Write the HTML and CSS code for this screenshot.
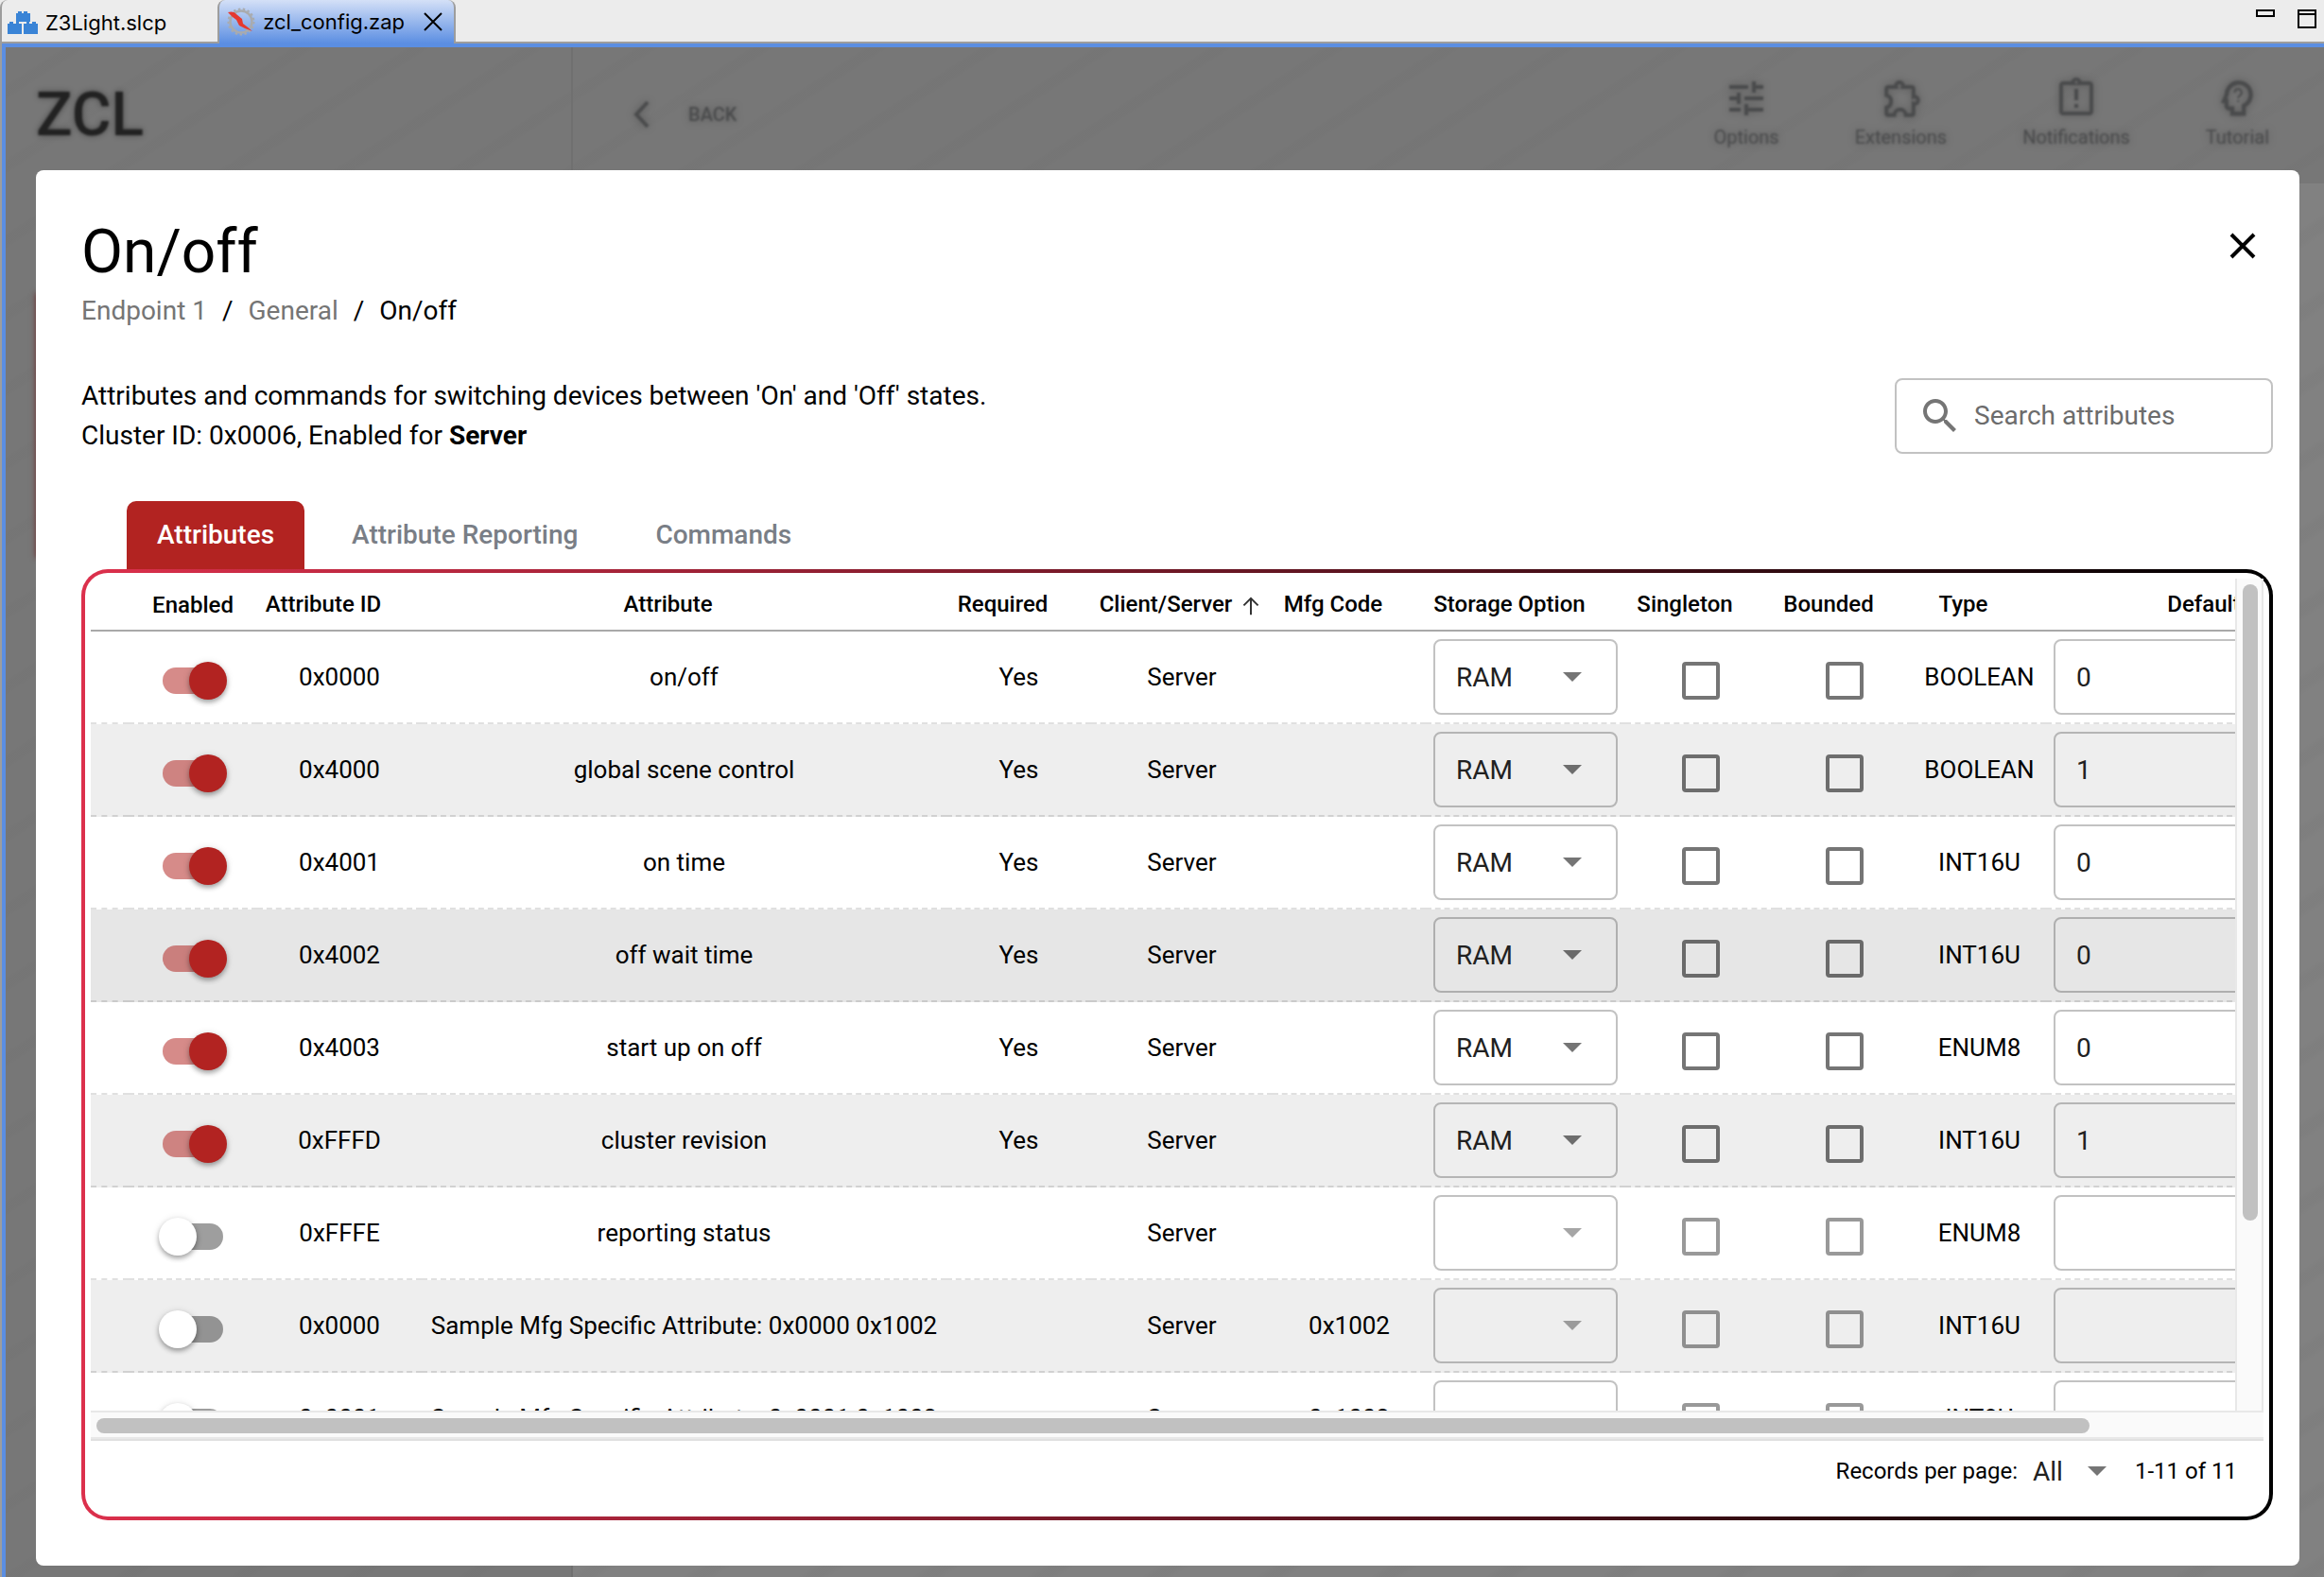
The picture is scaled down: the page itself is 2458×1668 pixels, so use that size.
FILE: index.html
```html
<!DOCTYPE html>
<html lang="en">
<head>
<meta charset="utf-8">
<title>zcl_config.zap</title>
<link rel="stylesheet" href="styles.css">
</head>
<body>
<svg class="defs" aria-hidden="true">
  <symbol id="sort" viewBox="0 0 24 24"><path d="M12 4.500V20M5.500 11.500 12 5l6.500 6.500" fill="none" stroke="currentColor" stroke-width="1.700"/></symbol>
</svg>

<div class="editor-tabs">
  <button class="editor-tab" type="button">
    <svg width="32" height="26" viewBox="0 0 32 26" fill="#3a84d6"><path d="M9 3h2V1h4v2h2V1h4v2h3v9H9z"/><path d="M0 14h2v-2h4v2h3v-2h3v2h3v11H0zM17 14h3v-2h3v2h3v-2h4v2h2v11H17z"/></svg>
    Z3Light.slcp
  </button>
  <button class="editor-tab active" type="button">
    <svg width="30" height="30" viewBox="0 0 30 30"><circle cx="15" cy="15" r="11.500" fill="none" stroke="#a9abae" stroke-width="2.500"/><circle cx="15" cy="15" r="13.500" fill="none" stroke="#a9abae" stroke-width="2" stroke-dasharray="2.500 2.500"/><path d="M1 5c3-1 7-1 9 2l6 5 1 5 4 3 6 5-8-3-6-3-3-6-4-3z" fill="#e5392f"/></svg>
    zcl_config.zap
    <svg class="tab-close" width="20" height="20" viewBox="0 0 20 20"><path d="M1 1l18 18M19 1 1 19" stroke="#000" stroke-width="2"/></svg>
  </button>
  <div class="window-controls">
    <button type="button" aria-label="Minimize"><svg width="20" height="20" viewBox="0 0 20 20" fill="none" stroke="#000" stroke-width="2"><path d="M1 1h18v6H1z"/></svg></button>
    <button type="button" aria-label="Maximize"><svg width="20" height="20" viewBox="0 0 20 20" fill="none" stroke="#000" stroke-width="2"><path d="M1 1h18v18H1zM1 5h18"/></svg></button>
  </div>
</div>

<div class="workspace">
  <div class="backdrop">
    <aside class="sidebar">
      <div class="brand">ZCL</div>
      <div class="endpoint-card"></div>
    </aside>
    <div class="content">
      <header class="toolbar">
        <button class="back" type="button"><svg width="20" height="32" viewBox="0 0 20 32"><path d="M16 3 4 16l12 13" fill="none" stroke="currentColor" stroke-width="4"/></svg>BACK</button>
        <nav class="tools">
          <button type="button"><svg width="48" height="48" viewBox="0 0 24 24"><path d="M3 17v2h6v-2H3zM3 5v2h10V5H3zm10 16v-2h8v-2h-8v-2h-2v6h2zM7 9v2H3v2h4v2h2V9H7zm14 4v-2H11v2h10zm-6-4h2V7h4V5h-4V3h-2v6z"/></svg>Options</button>
          <button type="button"><svg width="48" height="48" viewBox="0 0 24 24" fill="none"><path d="M5.500 6h4.200a1.900 1.900 0 1 1 3.600 0H18a.9.9 0 0 1 .9.900v4.300a1.900 1.900 0 1 1 0 3.600V20a.9.9 0 0 1-.9.900h-3.200a3 3 0 0 0-6 0H5.500a.9.9 0 0 1-.9-.9v-3.200a3.300 3.300 0 0 0 0-6.400V6.900a.9.9 0 0 1 .9-.9z" stroke="currentColor" stroke-width="2"/></svg>Extensions</button>
          <button type="button"><svg width="48" height="48" viewBox="0 0 24 24"><path d="M19 3h-4.180C14.400 1.840 13.300 1 12 1s-2.400.84-2.820 2H5c-1.100 0-2 .9-2 2v14c0 1.100.9 2 2 2h14c1.100 0 2-.9 2-2V5c0-1.100-.9-2-2-2zm-7-.25c.41 0 .75.340.750.750s-.340.750-.750.750-.750-.340-.750-.750.340-.750.750-.750zM19 19H5V5h14v14zM11 7h2v6h-2zm0 8h2v2h-2z"/></svg>Notifications</button>
          <button type="button"><svg width="48" height="48" viewBox="0 0 24 24" fill="none"><path d="M9.500 20.100v-2.700H8a1.600 1.600 0 0 1-1.600-1.600v-2.400H5.100L6.500 10a6.400 6.400 0 1 1 9.100 5.900v4.200z" stroke="currentColor" stroke-width="2.200"/><path d="M10.800 9a1.800 1.800 0 1 1 2.700 1.500c-.6.400-.9.800-.9 1.500M12.600 13v1" stroke="currentColor"/></svg>Tutorial</button>
        </nav>
      </header>
    </div>
  </div>

  <main class="dialog" role="dialog" aria-labelledby="dialog-title">
    <div class="dialog-head">
      <h1 id="dialog-title">On/off</h1>
      <button class="close" type="button" aria-label="Close"><svg width="28" height="28" viewBox="0 0 28 28"><path d="M2 2l24 24M26 2 2 26" stroke="#000" stroke-width="4"/></svg></button>
    </div>
    <nav class="crumbs" aria-label="Breadcrumb"><a href="#">Endpoint 1</a><span>/</span><a href="#">General</a><span>/</span><b>On/off</b></nav>
    <div class="summary">
      <p>Attributes and commands for switching devices between 'On' and 'Off' states.<br>Cluster ID: 0x0006, Enabled for <strong>Server</strong></p>
      <label class="search">
        <svg width="48" height="48" viewBox="0 0 24 24" fill="currentColor"><path d="M15.500 14h-.79l-.28-.27C15.410 12.590 16 11.110 16 9.500 16 5.910 13.090 3 9.500 3S3 5.910 3 9.500 5.910 16 9.500 16c1.610 0 3.090-.59 4.230-1.570l.27.28v.79l5 4.990L20.490 19l-4.990-5zm-6 0C7.010 14 5 11.990 5 9.500S7.010 5 9.500 5 14 7.010 14 9.500 11.990 14 9.500 14z"/></svg>
        <input type="text" placeholder="Search attributes" aria-label="Search attributes">
      </label>
    </div>
    <div class="tabs" role="tablist">
      <button class="tab selected" type="button" role="tab" aria-selected="true">Attributes</button>
      <button class="tab" type="button" role="tab">Attribute Reporting</button>
      <button class="tab" type="button" role="tab">Commands</button>
    </div>

    <section class="panel">
      <div class="scroller">
        <div class="viewport">
          <table>
            <colgroup><col class="c-pad"><col class="c-enabled"><col class="c-id"><col class="c-name"><col class="c-req"><col class="c-side"><col class="c-mfg"><col class="c-store"><col class="c-single"><col class="c-bound"><col class="c-type"><col class="c-default"></colgroup>
            <thead>
              <tr>
                <th></th>
                <th>Enabled</th>
                <th class="sortable">Attribute ID<svg><use href="#sort"/></svg></th>
                <th class="sortable">Attribute<svg><use href="#sort"/></svg></th>
                <th class="sortable">Required<svg><use href="#sort"/></svg></th>
                <th class="sortable sorted">Client/Server<svg><use href="#sort"/></svg></th>
                <th class="sortable">Mfg Code<svg><use href="#sort"/></svg></th>
                <th class="sortable">Storage Option<svg><use href="#sort"/></svg></th>
                <th class="sortable">Singleton<svg><use href="#sort"/></svg></th>
                <th class="sortable">Bounded<svg><use href="#sort"/></svg></th>
                <th class="sortable">Type<svg><use href="#sort"/></svg></th>
                <th class="sortable">Default<svg><use href="#sort"/></svg></th>
              </tr>
            </thead>
            <tbody>
              <tr>
                <td></td>
                <td class="control"><input class="toggle" type="checkbox" aria-label="Enable on/off" checked></td>
                <td>0x0000</td><td>on/off</td><td>Yes</td><td>Server</td><td></td>
                <td><div class="select"><select aria-label="Storage option"><option>RAM</option></select></div></td>
                <td class="control"><input class="check" type="checkbox" aria-label="Singleton"></td>
                <td class="control"><input class="check" type="checkbox" aria-label="Bounded"></td>
                <td>BOOLEAN</td>
                <td><input class="field" type="text" value="0" aria-label="Default"></td>
              </tr>
              <tr>
                <td></td>
                <td class="control"><input class="toggle" type="checkbox" aria-label="Enable global scene control" checked></td>
                <td>0x4000</td><td>global scene control</td><td>Yes</td><td>Server</td><td></td>
                <td><div class="select"><select aria-label="Storage option"><option>RAM</option></select></div></td>
                <td class="control"><input class="check" type="checkbox" aria-label="Singleton"></td>
                <td class="control"><input class="check" type="checkbox" aria-label="Bounded"></td>
                <td>BOOLEAN</td>
                <td><input class="field" type="text" value="1" aria-label="Default"></td>
              </tr>
              <tr>
                <td></td>
                <td class="control"><input class="toggle" type="checkbox" aria-label="Enable on time" checked></td>
                <td>0x4001</td><td>on time</td><td>Yes</td><td>Server</td><td></td>
                <td><div class="select"><select aria-label="Storage option"><option>RAM</option></select></div></td>
                <td class="control"><input class="check" type="checkbox" aria-label="Singleton"></td>
                <td class="control"><input class="check" type="checkbox" aria-label="Bounded"></td>
                <td>INT16U</td>
                <td><input class="field" type="text" value="0" aria-label="Default"></td>
              </tr>
              <tr class="hovered">
                <td></td>
                <td class="control"><input class="toggle" type="checkbox" aria-label="Enable off wait time" checked></td>
                <td>0x4002</td><td>off wait time</td><td>Yes</td><td>Server</td><td></td>
                <td><div class="select"><select aria-label="Storage option"><option>RAM</option></select></div></td>
                <td class="control"><input class="check" type="checkbox" aria-label="Singleton"></td>
                <td class="control"><input class="check" type="checkbox" aria-label="Bounded"></td>
                <td>INT16U</td>
                <td><input class="field" type="text" value="0" aria-label="Default"></td>
              </tr>
              <tr>
                <td></td>
                <td class="control"><input class="toggle" type="checkbox" aria-label="Enable start up on off" checked></td>
                <td>0x4003</td><td>start up on off</td><td>Yes</td><td>Server</td><td></td>
                <td><div class="select"><select aria-label="Storage option"><option>RAM</option></select></div></td>
                <td class="control"><input class="check" type="checkbox" aria-label="Singleton"></td>
                <td class="control"><input class="check" type="checkbox" aria-label="Bounded"></td>
                <td>ENUM8</td>
                <td><input class="field" type="text" value="0" aria-label="Default"></td>
              </tr>
              <tr>
                <td></td>
                <td class="control"><input class="toggle" type="checkbox" aria-label="Enable cluster revision" checked></td>
                <td>0xFFFD</td><td>cluster revision</td><td>Yes</td><td>Server</td><td></td>
                <td><div class="select"><select aria-label="Storage option"><option>RAM</option></select></div></td>
                <td class="control"><input class="check" type="checkbox" aria-label="Singleton"></td>
                <td class="control"><input class="check" type="checkbox" aria-label="Bounded"></td>
                <td>INT16U</td>
                <td><input class="field" type="text" value="1" aria-label="Default"></td>
              </tr>
              <tr>
                <td></td>
                <td class="control"><input class="toggle" type="checkbox" aria-label="Enable reporting status"></td>
                <td>0xFFFE</td><td>reporting status</td><td></td><td>Server</td><td></td>
                <td><div class="select off"><select aria-label="Storage option" disabled></select></div></td>
                <td class="control"><input class="check" type="checkbox" aria-label="Singleton" disabled></td>
                <td class="control"><input class="check" type="checkbox" aria-label="Bounded" disabled></td>
                <td>ENUM8</td>
                <td><input class="field" type="text" aria-label="Default" disabled></td>
              </tr>
              <tr>
                <td></td>
                <td class="control"><input class="toggle" type="checkbox" aria-label="Enable sample attribute 0x0000"></td>
                <td>0x0000</td><td>Sample Mfg Specific Attribute: 0x0000 0x1002</td><td></td><td>Server</td><td>0x1002</td>
                <td><div class="select off"><select aria-label="Storage option" disabled></select></div></td>
                <td class="control"><input class="check" type="checkbox" aria-label="Singleton" disabled></td>
                <td class="control"><input class="check" type="checkbox" aria-label="Bounded" disabled></td>
                <td>INT16U</td>
                <td><input class="field" type="text" aria-label="Default" disabled></td>
              </tr>
              <tr>
                <td></td>
                <td class="control"><input class="toggle" type="checkbox" aria-label="Enable sample attribute 0x0001"></td>
                <td>0x0001</td><td>Sample Mfg Specific Attribute: 0x0001 0x1002</td><td></td><td>Server</td><td>0x1002</td>
                <td><div class="select off"><select aria-label="Storage option" disabled></select></div></td>
                <td class="control"><input class="check" type="checkbox" aria-label="Singleton" disabled></td>
                <td class="control"><input class="check" type="checkbox" aria-label="Bounded" disabled></td>
                <td>INT8U</td>
                <td><input class="field" type="text" aria-label="Default" disabled></td>
              </tr>
            </tbody>
          </table>
        </div>
        <div class="track-y"><div class="thumb"></div></div>
        <div class="track-x"><div class="thumb"></div></div>
      </div>
      <footer class="pager">
        <label for="page-size">Records per page:</label>
        <div class="select bare"><select id="page-size"><option>All</option></select></div>
        <span>1-11 of 11</span>
      </footer>
    </section>
  </main>
</div>
</body>
</html>
```

FILE: styles.css
```css
* { box-sizing: border-box; }

body {
  margin: 0;
  height: 100vh;
  display: flex;
  flex-direction: column;
  background: #ececec;
  color: #000;
  font-family: Roboto, "Liberation Sans", sans-serif;
  font-size: 28px;
}

button, input, select { font: inherit; color: inherit; margin: 0; }
button { border: 0; padding: 0; background: none; display: flex; align-items: center; }
svg { flex: none; display: block; }
.defs { position: absolute; width: 0; height: 0; }

/* Editor tab strip */
.editor-tabs {
  flex: none;
  display: flex;
  height: 46px;
  border-bottom: 2px solid #9d9d9d;
  font-family: Inter, "Liberation Sans", sans-serif;
  font-size: 22px;
}
.editor-tab {
  height: 44px;
  padding: 4px 54px 0 6px;
  gap: 8px;
  border-left: 2px solid #9d9d9d;
  border-radius: 8px 0 0 0;
}
.editor-tab.active {
  height: 46px;
  padding: 0 12px 0 8px;
  border: 2px solid #9d9d9d;
  border-width: 0 2px;
  border-radius: 8px 8px 0 0;
  background: linear-gradient(#d4e0f7, #5b8ee2);
}
.tab-close { margin-left: 12px; }
.window-controls { display: flex; gap: 24px; margin-left: auto; padding: 0 8px; }
.window-controls button { align-self: flex-start; padding-top: 10px; }

/* Dimmed application behind the dialog */
.workspace {
  flex: 1;
  min-height: 0;
  display: grid;
  grid-template: minmax(0, 1fr) / minmax(0, 1fr);
  border-top: 4px solid #5b8ee2;
  border-left: 4px solid #5b8ee2;
  margin-left: 2px;
  box-shadow: -2px 0 #9d9d9d;
}
.backdrop, .dialog { grid-area: 1 / 1; }
.backdrop {
  display: flex;
  overflow: hidden;
  background:
    repeating-linear-gradient(147deg, transparent 0 30px, rgba(0, 0, 0, .02) 36px 44px, transparent 50px 66px),
    #818181;
  color: #4a4b4c;
}
.sidebar {
  width: 600px;
  border-right: 2px solid #707070;
  background: rgba(0, 0, 0, .07);
}
.brand {
  height: 144px;
  padding: 32px;
  line-height: 80px;
  font-size: 64px;
  font-weight: 500;
  color: #222;
  filter: blur(1px);
  text-shadow: 0 0 6px rgba(0, 0, 0, .4);
}
.endpoint-card {
  height: 280px;
  margin: 116px 32px 0;
  background: #6b2a2a;
  box-shadow: 0 0 6px #6b2a2a;
}
.content { flex: 1; }
.toolbar {
  display: flex;
  justify-content: space-between;
  height: 144px;
  padding: 0 58px 0 63px;
  background: rgba(0, 0, 0, .07);
  font-size: 20px;
}
.toolbar button { filter: drop-shadow(0 0 4px rgba(0, 0, 0, .25)) blur(1px); }
.toolbar svg { fill: currentColor; }
.back { gap: 39px; padding-bottom: 2px; font-weight: 500; }
.tools { display: flex; gap: 80px; padding-top: 30px; }
.tools button { flex-direction: column; align-self: flex-start; gap: 5px; line-height: 24px; }
.tools svg { margin: 0 -8px; }
.tools svg[fill="none"] { fill: none; }

/* Dialog */
.dialog {
  display: flex;
  flex-direction: column;
  min-width: 0;
  margin: 130px 26px 12px 32px;
  padding: 48px 28px 48px 48px;
  border-radius: 8px;
  background: #fff;
}
.dialog-head { display: flex; justify-content: space-between; align-items: flex-start; }
h1 { margin: 0; font-size: 64px; font-weight: 400; line-height: 78px; }
.close { width: 64px; height: 64px; justify-content: center; }
.crumbs { display: flex; gap: 16px; line-height: 46px; }
.crumbs a { color: #757575; text-decoration: none; }
.crumbs b { font-weight: 400; }
.summary { display: flex; justify-content: space-between; align-items: center; margin: 46px 0 48px; }
.summary p { margin: 0; line-height: 42px; }
.search {
  display: flex;
  align-items: center;
  width: 400px;
  height: 80px;
  padding: 0 22px;
  gap: 12px;
  border: 2px solid #c2c2c2;
  border-radius: 8px;
  color: #757575;
}
.search input { flex: 1; min-width: 0; padding: 0 0 2px; border: 0; background: none; outline: 0; }
.search input::placeholder { color: #6c6c6c; opacity: 1; }

.tabs { display: flex; gap: 18px; padding-left: 48px; }
.tab { height: 72px; padding: 0 32px 2px; font-weight: 500; color: #797e86; }
.tab.selected { background: #b22321; color: #fff; border-radius: 10px 10px 0 0; }

/* Attribute table */
.panel {
  flex: 1;
  min-height: 0;
  display: flex;
  flex-direction: column;
  padding: 6px 6px 16px;
  border: 4px solid transparent;
  border-radius: 28px;
  background:
    linear-gradient(#fff, #fff) padding-box,
    linear-gradient(90deg, #dc304c, #000) border-box;
}
.scroller {
  flex: 1;
  min-height: 0;
  display: grid;
  grid-template: minmax(0, 1fr) 30px / minmax(0, 1fr) 30px;
  border-bottom: 2px solid #e0e0e0;
}
.viewport { overflow: hidden; }
.track-y, .track-x { background: #fafafa; border: 2px solid #e8e8e8; padding: 6px; }
.track-y { border-width: 0 2px; }
.track-x { grid-column: 1 / 3; border-width: 2px 0; }
.thumb { border-radius: 8px; background: #c1c1c1; }
.track-y .thumb { width: 16px; height: 77.5%; }
.track-x .thumb { width: 92.2%; height: 16px; }

table { table-layout: fixed; width: 2436px; border-spacing: 0; font-size: 26px; text-align: center; }
.c-pad { width: 40px; }
.c-enabled { width: 136px; }
.c-id { width: 174px; }
.c-name { width: 555px; }
.c-req { width: 153px; }
.c-side { width: 192px; }
.c-mfg { width: 162px; }
.c-store { width: 211px; }
.c-single { width: 160px; }
.c-bound { width: 144px; }
.c-type { width: 141px; }
.c-default { width: 368px; }

th {
  height: 56px;
  padding: 2px 0 0;
  border-bottom: 2px solid #a9a9a9;
  font-size: 24px;
  font-weight: 500;
  white-space: nowrap;
}
th svg { display: inline-block; width: 28px; height: 28px; margin-left: 6px; vertical-align: middle; opacity: 0; }
.sorted svg { opacity: .8; }
td { height: 98px; padding: 0 8px; border-bottom: 2px dashed rgba(0, 0, 0, .12); white-space: nowrap; }
tbody tr:nth-child(even) { background: #eee; }
tbody .hovered:nth-child(even) { background: #e6e6e6; }
.control { padding-top: 8px; }

.toggle, .check { appearance: none; display: block; margin: 0 auto; }
.toggle {
  display: flex;
  align-items: center;
  width: 72px;
  height: 40px;
}
.toggle::before {
  content: "";
  width: 64px;
  height: 28px;
  margin-left: 4px;
  border-radius: 14px;
  background: rgba(0, 0, 0, .38);
}
.toggle::after {
  content: "";
  width: 40px;
  height: 40px;
  margin-left: -68px;
  border-radius: 50%;
  background: #fff;
  box-shadow: 0 3px 5px rgba(0, 0, 0, .3), 0 1px 8px rgba(0, 0, 0, .12);
}
.toggle:checked::before { background: rgba(178, 35, 33, .53); }
.toggle:checked::after { margin-left: -36px; background: #b22321; }
.check { width: 40px; height: 40px; border: 4px solid rgba(0, 0, 0, .54); border-radius: 4px; }
.check:disabled { border-color: rgba(0, 0, 0, .4); }

.select { display: grid; align-items: center; }
.select select, .field {
  width: 100%;
  height: 80px;
  padding: 0 22px;
  border: 2px solid rgba(0, 0, 0, .24);
  border-radius: 8px;
  background: none;
  font-size: 28px;
  color: #212121;
  opacity: 1;
}
.field { display: block; }
.select select { appearance: none; grid-area: 1 / 1; }
.select::after {
  content: "";
  grid-area: 1 / 1;
  justify-self: end;
  width: 20px;
  height: 10px;
  margin-right: 38px;
  background: rgba(0, 0, 0, .54);
  clip-path: polygon(0 0, 100% 0, 50% 100%);
  pointer-events: none;
}
.select.off::after { background: rgba(0, 0, 0, .35); }

.pager {
  flex: none;
  display: flex;
  align-items: center;
  justify-content: flex-end;
  height: 64px;
  padding-right: 28px;
  font-size: 24px;
}
.select.bare select { width: 106px; height: 48px; padding: 0 0 0 16px; border: 0; }
.select.bare::after { margin-right: 12px; }
.pager span { margin-left: 18px; }
```
